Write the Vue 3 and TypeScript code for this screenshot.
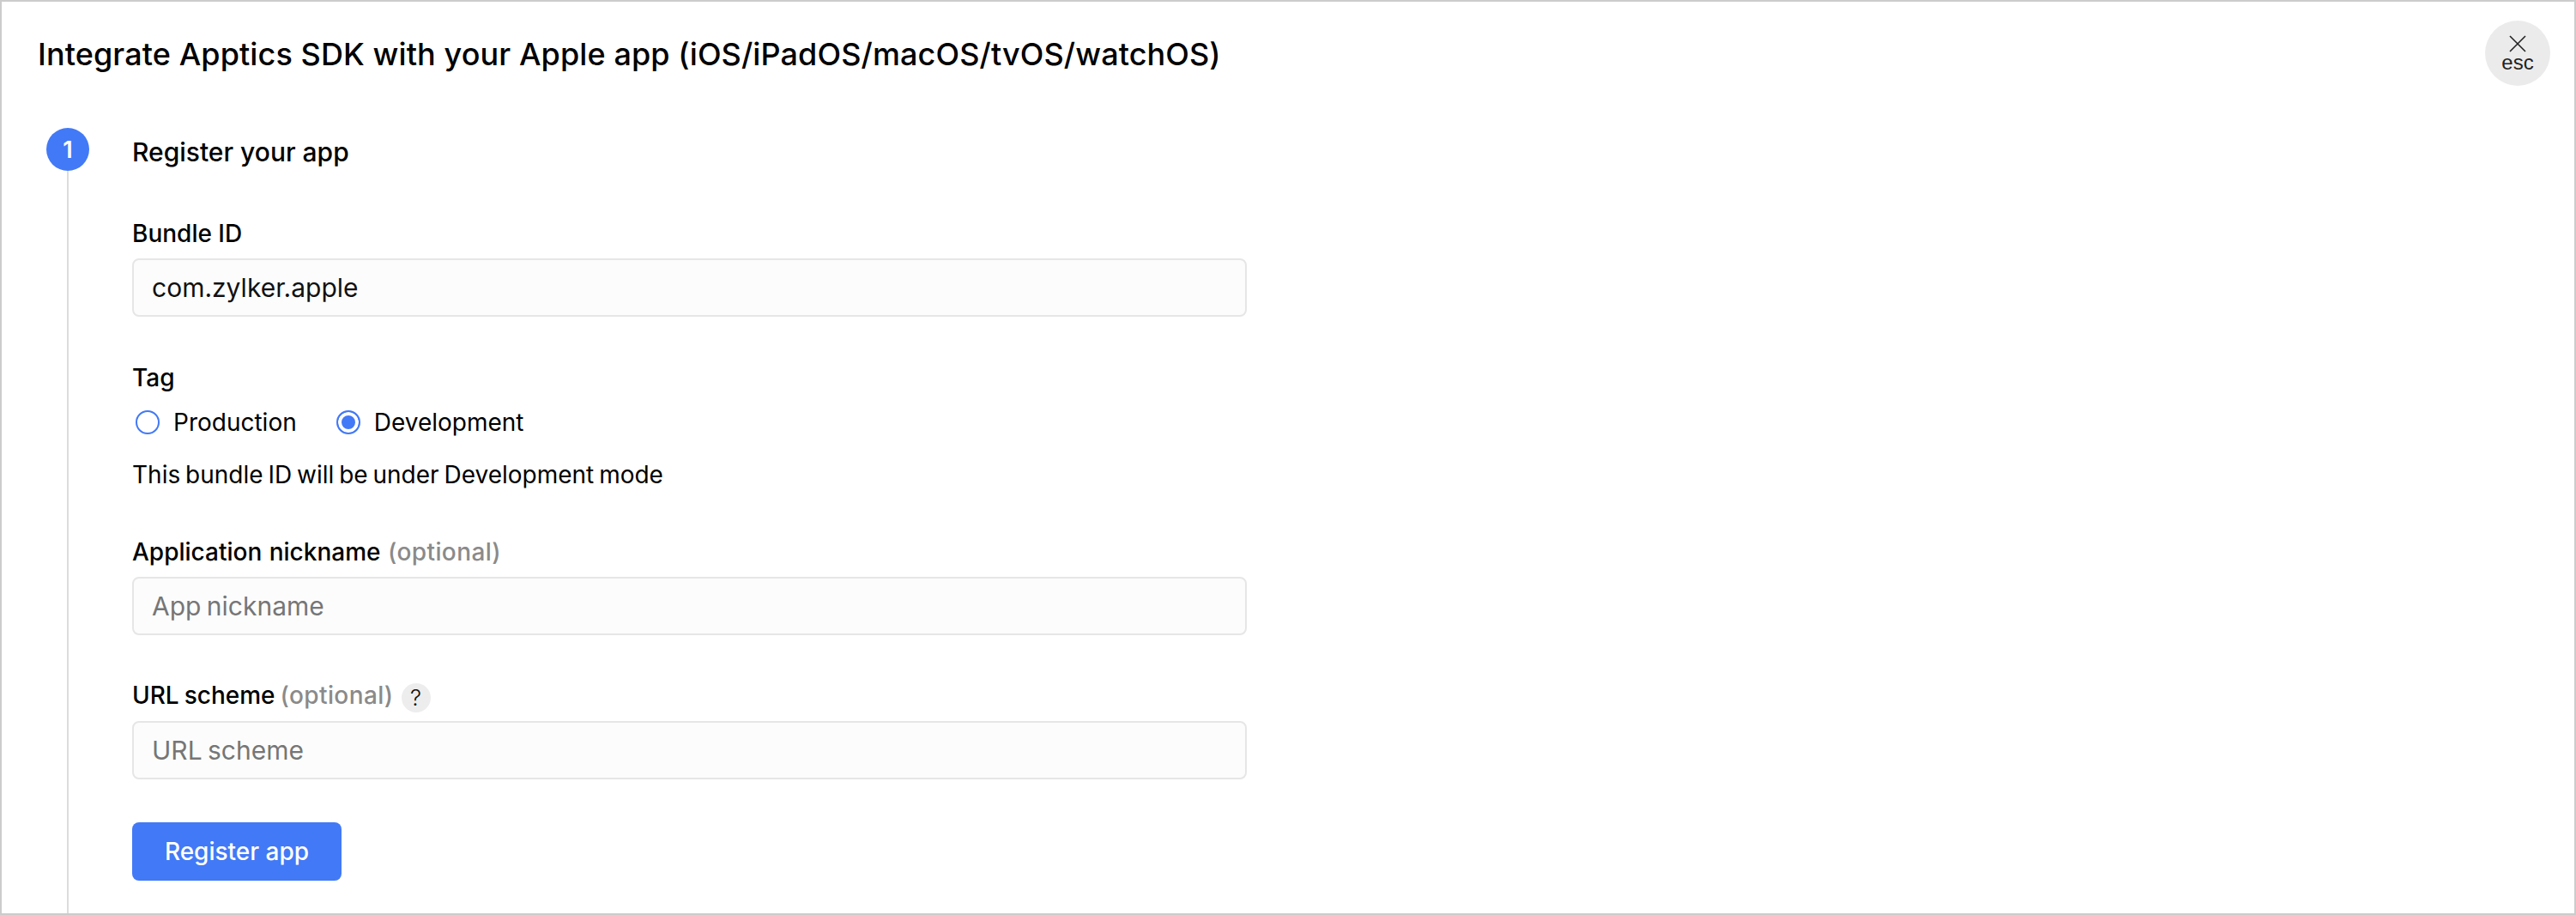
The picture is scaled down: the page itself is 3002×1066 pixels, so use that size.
<script setup lang="ts">
import { ref } from 'vue'

const tag = ref<'production' | 'development'>('development')
const bundleId = ref('com.zylker.apple')
const nickname = ref('')
const urlScheme = ref('')
</script>

<template>
  <div class="page">
    <header class="header">
      <h1 class="title">Integrate Apptics SDK with your Apple app (iOS/iPadOS/macOS/tvOS/watchOS)</h1>
      <button class="close" type="button">
        <svg class="close-x" width="20" height="20" viewBox="0 0 20 20" aria-hidden="true">
          <path d="M1 1L19 19M19 1L1 19" stroke="#222" stroke-width="1.6" fill="none" />
        </svg>
        <span class="close-text">esc</span>
      </button>
    </header>

    <section class="step">
      <div class="rail">
        <div class="badge">1</div>
        <div class="line"></div>
      </div>
      <div class="content">
        <h2 class="step-title">Register your app</h2>

        <label class="label first">Bundle ID</label>
        <input v-model="bundleId" class="field" type="text" />

        <label class="label tag-label">Tag</label>
        <div class="radios">
          <label class="radio">
            <input v-model="tag" type="radio" value="production" />
            <span class="dot"></span>
            <span>Production</span>
          </label>
          <label class="radio">
            <input v-model="tag" type="radio" value="development" />
            <span class="dot"></span>
            <span>Development</span>
          </label>
        </div>
        <p class="hint">This bundle ID will be under Development mode</p>

        <label class="label nick-label">Application nickname <span class="optional">(optional)</span></label>
        <input v-model="nickname" class="field" type="text" placeholder="App nickname" />

        <div class="label url-label">
          <span>URL scheme <span class="optional">(optional)</span></span>
          <span class="help">?</span>
        </div>
        <input v-model="urlScheme" class="field" type="text" placeholder="URL scheme" />

        <button class="submit" type="button">Register app</button>
      </div>
    </section>
  </div>
</template>

<style>
html, body { margin: 0; background: #fff; }
</style>

<style scoped>
.page {
  box-sizing: border-box;
  width: 3002px;
  height: 1066px;
  border: 2px solid #cccccc;
  background: #fff;
  color: #000;
  font-family: Inter, "Noto Sans", sans-serif;
  overflow: hidden;
  display: flex;
  flex-direction: column;
}
.header {
  display: flex;
  justify-content: space-between;
  align-items: flex-start;
  padding: 22px 28px 0 42px;
  height: 147px;
  box-sizing: border-box;
  flex: none;
}
.title {
  margin: 14px 0 0;
  font-size: 36px;
  line-height: 50px;
  font-weight: 550;
  letter-spacing: 0.1px;
}
.close {
  width: 76px;
  height: 76px;
  border: 0;
  padding: 0;
  border-radius: 50%;
  background: #ebebeb;
  display: flex;
  flex-direction: column;
  align-items: center;
  justify-content: flex-start;
  color: #222;
}
.close-x { margin-top: 17px; display: block; }
.close-text {
  font-family: "Liberation Sans", Arial, sans-serif;
  font-size: 24px;
  line-height: 24px;
}
.step { flex: 1; display: flex; min-height: 0; }
.rail {
  width: 152px;
  flex: none;
  display: flex;
  flex-direction: column;
  align-items: flex-start;
  padding-left: 52px;
  box-sizing: border-box;
}
.badge {
  width: 50px;
  height: 50px;
  border-radius: 50%;
  background: #4279f6;
  color: #fff;
  font-size: 27px;
  font-weight: 600;
  display: flex;
  align-items: center;
  justify-content: center;
  flex: none;
}
.line { width: 2px; flex: 1; background: #dcdcdc; margin-left: 24px; }
.content { width: 1299px; }
.step-title {
  margin: 3px 0 0;
  font-size: 30px;
  line-height: 50px;
  font-weight: 550;
}
.label {
  display: flex;
  align-items: center;
  font-size: 28px;
  line-height: 40px;
  font-weight: 550;
  white-space: pre;
}
.first { margin-top: 50px; }
.tag-label { margin-top: 51px; }
.nick-label { margin-top: 50px; display: block; word-spacing: 1px; }
.url-label { margin-top: 50px; margin-bottom: 10px; word-spacing: -1.5px; }
.optional { color: #8a8a8a; font-weight: 500; letter-spacing: 0.4px; }
.help {
  width: 34px;
  height: 34px;
  border-radius: 50%;
  background: #ededed;
  margin-left: 9px;
  margin-top: 6px;
  display: flex;
  align-items: center;
  justify-content: center;
  font-family: Inter, sans-serif;
  font-size: 26px;
  font-weight: 300;
  color: #111;
}
.field {
  display: block;
  box-sizing: border-box;
  width: 1299px;
  height: 68px;
  margin: 9px 0 0;
  padding: 0 21px;
  border: 2px solid #e6e6e6;
  border-radius: 8px;
  background: #fcfcfc;
  font-family: inherit;
  font-size: 30px;
  word-spacing: -2px;
  color: #111;
  outline: none;
}
.field::placeholder { color: #767676; opacity: 1; }
.radios { display: flex; gap: 46px; margin-top: 12px; padding-left: 4px; height: 40px; align-items: center; }
.radio {
  display: flex;
  align-items: center;
  gap: 16px;
  font-size: 28px;
  line-height: 40px;
}
.radio input { position: absolute; opacity: 0; width: 0; height: 0; margin: 0; }
.dot {
  box-sizing: border-box;
  width: 28px;
  height: 28px;
  border: 2px solid #4279f6;
  border-radius: 50%;
  background: #fff;
  flex: none;
}
.radio input:checked + .dot {
  background: #4279f6;
  box-shadow: inset 0 0 0 4px #fff;
}
.hint { margin: 21px 0 0; font-size: 28px; line-height: 40px; word-spacing: -2px; }
.submit {
  display: block;
  box-sizing: border-box;
  width: 244px;
  height: 68px;
  margin-top: 50px;
  border: 0;
  border-radius: 8px;
  background: #4279f6;
  color: #fff;
  font-family: inherit;
  font-size: 28px;
  font-weight: 500;
  padding: 0;
}
</style>
